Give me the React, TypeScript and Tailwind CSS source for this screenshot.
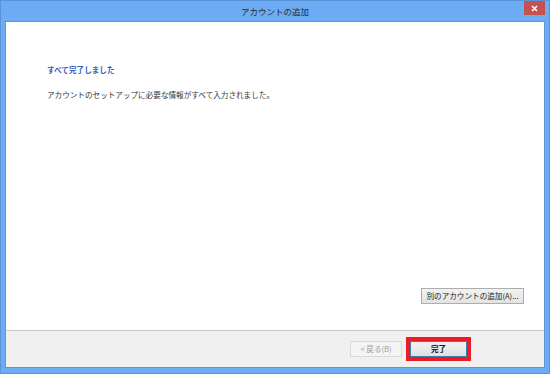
import React from 'react';

const jp = { fontFamily: '"Noto Sans CJK JP", "Liberation Sans", sans-serif' };

const App: React.FC = () => {
  return (
    <div
      className="flex h-[374px] w-[550px] flex-col overflow-hidden border border-[#5a93d6] bg-[#6cacf4]"
      style={jp}
    >
      {/* title bar */}
      <div className="relative flex h-[20px] shrink-0 items-center justify-center">
        <span className="text-[8.5px] leading-none text-[#2b2b2b]">アカウントの追加</span>
        <button
          type="button"
          className="absolute right-[4px] top-0 flex h-[14px] w-[21px] items-center justify-center bg-[#c75050]"
        >
          <svg width="7" height="7" viewBox="0 0 7 7">
            <path d="M1 1L6 6M6 1L1 6" stroke="#fff" strokeWidth="1.6" />
          </svg>
        </button>
      </div>

      {/* client area */}
      <div className="mx-[4px] mb-[5px] flex min-h-0 flex-1 flex-col border border-[#5b95d8] bg-white">
        <div className="flex flex-1 flex-col pl-[41px] pr-[20px] pt-[44px]">
          <div className="text-[7.6px] font-bold leading-none text-[#3655c5]">すべて完了しました</div>
          <div className="mt-[17px] text-[7.6px] leading-none text-[#333]">
            アカウントのセットアップに必要な情報がすべて入力されました。
          </div>
          <div className="mt-auto mb-[26px] flex justify-end">
            <button
              type="button"
              className="flex h-[16px] w-[103px] items-center justify-center border border-[#adadad] bg-gradient-to-b from-[#f2f2f2] to-[#e3e3e3] text-[7.6px] leading-none text-[#222]"
            >
              別のアカウントの追加(A)...
            </button>
          </div>
        </div>

        <div className="flex h-[37px] shrink-0 items-center justify-end gap-[4px] border-t border-[#c9c9c9] bg-[#f0f0f0] pr-[73px]">
          <button
            type="button"
            className="flex h-[16px] w-[52px] items-center justify-center border border-[#d9d9d9] bg-[#f4f4f4] text-[7.6px] leading-none text-[#a0a0a0]"
          >
            &lt; 戻る(B)
          </button>
          <div className="border-[4px] border-[#ed1c24]">
            <button
              type="button"
              className="flex h-[16px] w-[57px] items-center justify-center border border-[#3c7fb1] bg-gradient-to-b from-[#f2f2f2] to-[#e1e1e1] text-[7.6px] font-bold leading-none text-[#111]"
            >
              完了
            </button>
          </div>
        </div>
      </div>
    </div>
  );
};

export default App;
